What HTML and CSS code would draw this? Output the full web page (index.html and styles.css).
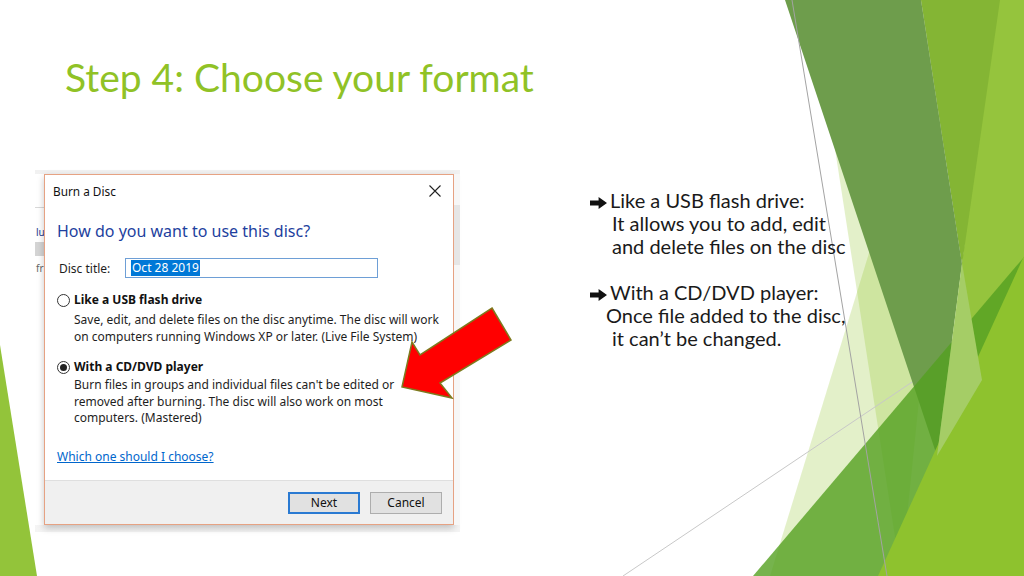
FILE: index.html
```html
<!DOCTYPE html>
<html>
<head>
<meta charset="utf-8">
<title>Step 4: Choose your format</title>
<link rel="stylesheet" href="styles.css">
</head>
<body>
<div class="slide">
  <svg class="deco" viewBox="0 0 1024 576" width="1024" height="576" aria-hidden="true">
    <polygon points="812,0 960,0 901,576" fill="rgba(144,194,38,0.25)"/>
    <polygon points="770,576 896,165 1010,576" fill="rgba(144,194,38,0.25)"/>
    <line x1="623" y1="576" x2="1024" y2="307" stroke="#c8c8c8" stroke-width="1"/>
    <polygon points="995,0 1024,0 1024,576 940,576 962,263" fill="#95c43d"/>
    <polygon points="921,0 1000,0 962,265" fill="#84b534"/>
    <polygon points="785,0 921,0 962,264 937,456" fill="#6e9d4c"/>
    <polygon points="753,576 1024,257 1024,576" fill="rgba(84,160,33,0.8)"/>
    <polygon points="878,576 1024,256 1024,576" fill="#8ec22e"/>
    <polygon points="962,263 982,380 937,456" fill="#a5cd66"/>
    <line x1="792" y1="0" x2="887" y2="576" stroke="#a3a3a3" stroke-width="1"/>
    <polygon points="0,345 37,576 0,576" fill="#93c43a"/>
  </svg>

  <h1 class="title">Step 4: Choose your format</h1>

  <div class="content">
    <div class="shot">
      <div class="behind-left">
        <div class="bl-line"></div>
        <div class="bl-text bl-lu">lu</div>
        <div class="bl-box"></div>
        <div class="bl-text bl-fr">fr</div>
      </div>
      <div class="dialog">
        <div class="titlebar">
          <span class="wintitle">Burn a Disc</span>
          <svg class="close" viewBox="0 0 12 12" width="12" height="12" aria-hidden="true">
            <path d="M0.5 0.5 L11.5 11.5 M11.5 0.5 L0.5 11.5" stroke="#222" stroke-width="1.1" fill="none"/>
          </svg>
        </div>
        <div class="dbody">
          <div class="heading">How do you want to use this disc?</div>
          <div class="titlerow">
            <span class="lbl">Disc title:</span>
            <div class="input"><span class="sel">Oct 28 2019</span></div>
          </div>
          <div class="option opt1"><span class="radio"></span><span class="optlabel">Like a USB flash drive</span></div>
          <p class="desc desc1">Save, edit, and delete files on the disc anytime. The disc will work<br>on computers running Windows XP or later. (Live File System)</p>
          <div class="option opt2"><span class="radio on"></span><span class="optlabel">With a CD/DVD player</span></div>
          <p class="desc desc2">Burn files in groups and individual files can't be edited or<br>removed after burning. The disc will also work on most<br>computers. (Mastered)</p>
          <a class="link" href="#">Which one should I choose?</a>
        </div>
        <div class="footer">
          <span class="btn primary">Next</span>
          <span class="btn">Cancel</span>
        </div>
      </div>
      <div class="behind-right"><div class="br-band"></div></div>
    </div>

    <div class="notes">
      <div class="nline"><svg class="arr" viewBox="0 0 17 12" width="17" height="12" aria-hidden="true"><path d="M0 3.6 H8.6 V0 L17 6 L8.6 12 V8.4 H0 Z" fill="#111"/></svg>Like a USB flash drive:</div>
      <div class="nline ind2">It allows you to add, edit</div>
      <div class="nline ind2">and delete files on the disc</div>
      <div class="nline blank">&nbsp;</div>
      <div class="nline"><svg class="arr" viewBox="0 0 17 12" width="17" height="12" aria-hidden="true"><path d="M0 3.6 H8.6 V0 L17 6 L8.6 12 V8.4 H0 Z" fill="#111"/></svg>With a CD/DVD player:</div>
      <div class="nline ind1">Once file added to the disc,</div>
      <div class="nline ind2">it can’t be changed.</div>
    </div>
  </div>

  <svg class="redarrow" viewBox="0 0 118 98" width="118" height="98" aria-hidden="true">
    <polygon points="94,4 113,36 42,79 54,94 4,83 14,38 22,51" fill="#ff0000" stroke="#7d7a1e" stroke-width="1.5" stroke-linejoin="miter"/>
  </svg>
</div>
</body>
</html>
```

FILE: styles.css
```css
html, body {
  margin: 0;
  padding: 0;
  background: #ffffff;
}

.slide {
  position: relative;
  width: 1024px;
  height: 576px;
  overflow: hidden;
  background: #ffffff;
}

.deco {
  position: absolute;
  left: 0;
  top: 0;
  z-index: 0;
}

.title {
  position: relative;
  z-index: 1;
  margin: 0;
  padding: 54px 0 0 65px;
  height: 46px;
  font-family: "Lato", "Open Sans", sans-serif;
  font-weight: 400;
  font-size: 39px;
  line-height: 46px;
  color: #90c226;
}

.content {
  position: relative;
  z-index: 1;
  display: flex;
  align-items: flex-start;
  margin-top: 70px;
}

/* screenshot picture */
.shot {
  display: flex;
  align-items: flex-start;
  margin-left: 35px;
  width: 425px;
  height: 362px;
  box-sizing: border-box;
  padding-top: 4px;
  background: linear-gradient(#f1f1f1, #f6f6f6 10%, #ffffff 60%, #f4f4f4);
}

.behind-left {
  width: 9px;
  height: 351px;
  overflow: hidden;
  background: #ffffff;
  font-family: "Noto Sans", "Liberation Sans", sans-serif;
  font-size: 10px;
  color: #333;
}

.bl-line {
  margin-top: 33px;
  height: 1px;
  background: #d8d8d8;
}

.bl-text {
  line-height: 14px;
  padding-left: 1px;
  white-space: nowrap;
}

.bl-lu {
  margin-top: 17px;
  color: #2a3a8a;
}

.bl-box {
  margin-top: 3px;
  height: 14px;
  background: #d4d4d4;
}

.bl-fr {
  margin-top: 5px;
  color: #666;
}

.behind-right {
  width: 6px;
  height: 351px;
  background: #f7f7f7;
}

.br-band {
  margin-top: 31px;
  height: 60px;
  background: #e6e6e6;
}

.dialog {
  width: 410px;
  height: 351px;
  box-sizing: border-box;
  border: 1px solid #e6a283;
  background: #ffffff;
  display: flex;
  flex-direction: column;
  box-shadow: 0 3px 7px rgba(0, 0, 0, 0.22);
  font-family: "Noto Sans", "Liberation Sans", sans-serif;
  font-size: 12px;
  color: #1e1e1e;
}

.titlebar {
  height: 32px;
  flex: none;
  display: flex;
  align-items: center;
  justify-content: space-between;
  padding: 0 12px 0 8px;
}

.wintitle {
  font-size: 11.8px;
  color: #111;
}

.dbody {
  flex: 1;
  padding: 13px 12px 0 12px;
  display: flex;
  flex-direction: column;
  align-items: flex-start;
}

.heading {
  font-size: 16px;
  line-height: 22px;
  color: #1e3f9e;
}

.titlerow {
  margin-top: 16px;
  display: flex;
  align-items: center;
  height: 20px;
}

.lbl {
  width: 66px;
  padding-left: 2px;
}

.input {
  width: 253px;
  height: 20px;
  box-sizing: border-box;
  border: 1px solid #6e9fd6;
  padding-left: 5px;
  display: flex;
  align-items: center;
}

.sel {
  background: #0078d7;
  color: #ffffff;
  line-height: 16px;
  padding: 0 1px;
}

.option {
  display: flex;
  align-items: center;
  line-height: 16px;
  font-weight: 700;
  color: #111;
}

.opt1 {
  margin-top: 14px;
}

.opt2 {
  margin-top: 14px;
}

.radio {
  width: 11px;
  height: 11px;
  border: 1px solid #333;
  border-radius: 50%;
  background: #fff;
  margin-right: 4px;
  display: flex;
  align-items: center;
  justify-content: center;
}

.radio.on::after {
  content: "";
  width: 7px;
  height: 7px;
  border-radius: 50%;
  background: #222;
}

.desc {
  margin: 4px 0 0 17px;
  line-height: 16.5px;
  color: #1e1e1e;
  white-space: nowrap;
}

.desc2 {
  margin-top: 2px;
}

.link {
  margin-top: 22px;
  line-height: 16px;
  color: #0066cc;
  text-decoration: underline;
}

.footer {
  flex: none;
  height: 43px;
  border-top: 1px solid #dfdfdf;
  background: #f0f0f0;
  display: flex;
  align-items: center;
  justify-content: flex-end;
  gap: 10px;
  padding-right: 11px;
}

.btn {
  width: 72px;
  height: 22px;
  box-sizing: border-box;
  border: 1px solid #adadad;
  background: #e1e1e1;
  display: flex;
  align-items: center;
  justify-content: center;
  color: #111;
}

.btn.primary {
  border: 2px solid #2a7ad2;
}

/* right notes */
.notes {
  margin-left: 130px;
  margin-top: 19px;
  font-family: "Lato", "Open Sans", sans-serif;
  font-size: 20px;
  line-height: 23px;
  color: #1a1a1a;
  white-space: nowrap;
}

.arr {
  display: inline-block;
  vertical-align: -1px;
  margin-right: 3px;
}

.ind1 {
  padding-left: 16px;
}

.ind2 {
  padding-left: 22px;
}

.redarrow {
  position: absolute;
  left: 398px;
  top: 304px;
  z-index: 2;
}
```
